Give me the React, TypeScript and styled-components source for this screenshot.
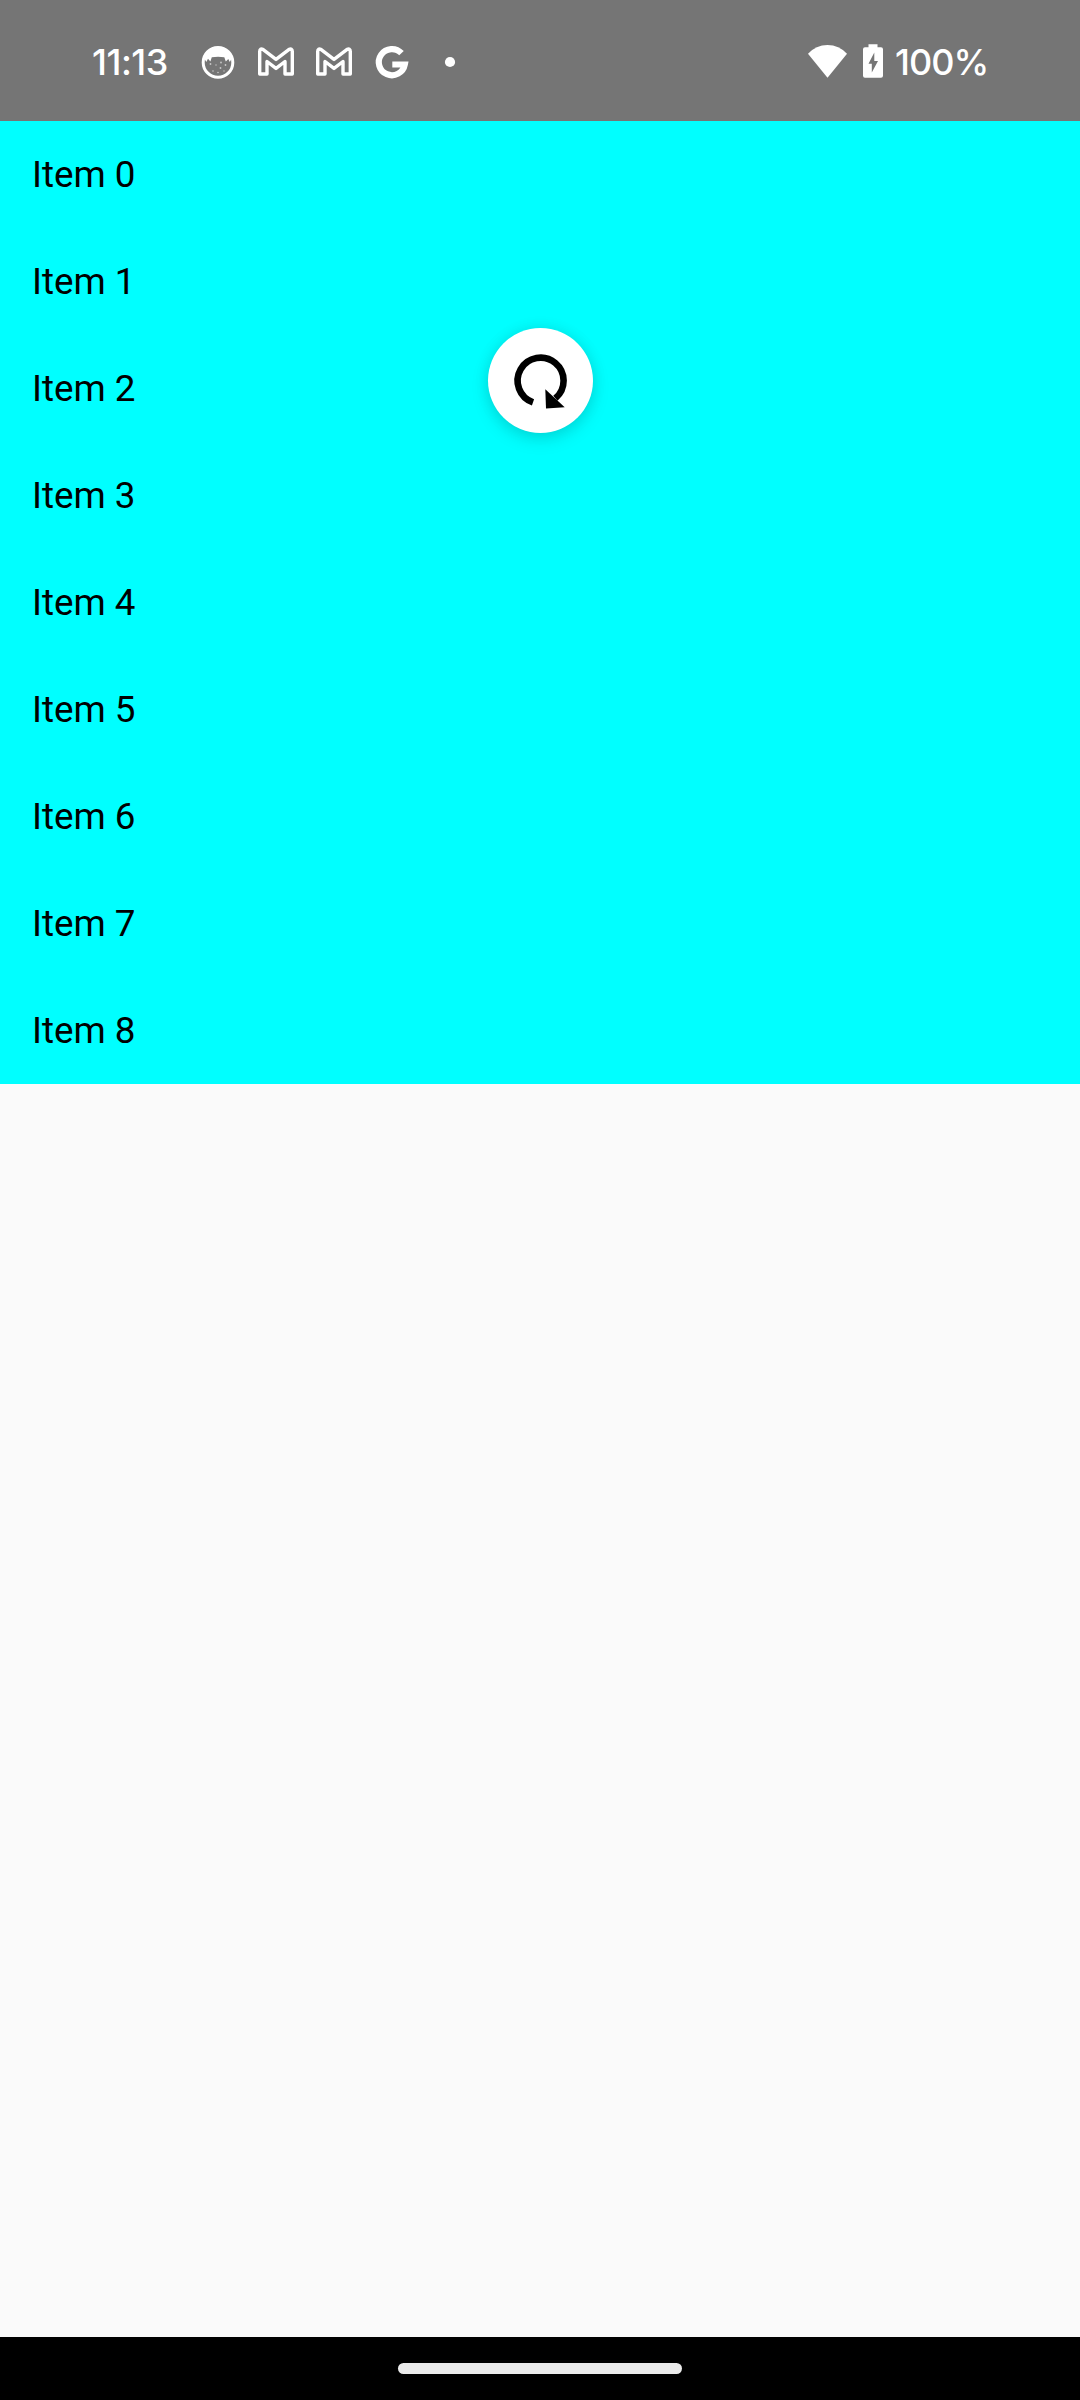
import React from "react";
import styled, { createGlobalStyle } from "styled-components";

const GlobalStyle = createGlobalStyle`
  body { margin: 0; background: #fafafa; }
`;

const Screen = styled.div`
  position: relative;
  display: flex;
  flex-direction: column;
  width: 1080px;
  height: 2400px;
  overflow: hidden;
  background: #fafafa;
  color: #000;
  font-family: Roboto, "Liberation Sans", sans-serif;
`;

const StatusBar = styled.header`
  display: flex;
  flex: none;
  justify-content: space-between;
  box-sizing: border-box;
  height: 121px;
  padding: 40px 93px 37px 92px;
  background: #757575;
  color: #fff;
`;

const StatusGroup = styled.div`
  display: flex;
  align-items: center;
  height: 44px;
`;

const StatusText = styled.span<{ $width: number; $spacing: number }>`
  width: ${(p) => p.$width}px;
  font: 500 36px/43px Inter, Roboto, sans-serif;
  letter-spacing: ${(p) => p.$spacing}px;
  white-space: nowrap;
`;

const Notifications = styled.div`
  display: flex;
  margin-left: 29px;
`;

const Glyph = styled.svg<{ $gap?: number }>`
  display: block;
  flex: none;
  margin-right: ${(p) => p.$gap ?? 0}px;
`;

const List = styled.ul`
  flex: none;
  margin: 0;
  padding: 0;
  list-style: none;
  background: #00ffff;
`;

const Row = styled.li`
  padding: 32px;
  font-size: 36.75px;
  line-height: 43px;
`;

const Spacer = styled.div`
  flex: 1;
`;

const NavBar = styled.footer`
  display: flex;
  flex: none;
  justify-content: center;
  box-sizing: border-box;
  height: 63px;
  padding-top: 26px;
  background: #000;
`;

const Handle = styled.div`
  width: 284px;
  height: 11px;
  border-radius: 6px;
  background: #ebebeb;
`;

const RefreshIndicator = styled.div`
  position: absolute;
  top: 328.4px;
  left: 488px;
  width: 105px;
  height: 105px;
  border-radius: 50%;
  background: #fff;
  box-shadow: 0 6px 18px rgba(0, 0, 0, 0.13), 0 0 16px rgba(0, 0, 0, 0.07);
`;

const CatIcon = () => (
  <Glyph width="58" height="44" viewBox="0 0 58 44">
    <circle cx="29" cy="22.4" r="14.8" fill="none" stroke="#fff" strokeWidth="3" />
    <path
      fill="#fff"
      d="M15 18C17 11 22 7 29 7S41 11 43 18L40.800 22L39.300 19L36.800 21.500L35.300 17.200Q29 16.200 22.800 17.200L21.400 21.500L19 18.700L17.300 22Z"
    />
    <g fill="#fff" fillOpacity="0.6">
      <circle cx="21.500" cy="24" r=".9" /><circle cx="32" cy="22.500" r=".9" />
      <circle cx="36.500" cy="25" r=".9" /><circle cx="27" cy="25" r=".7" />
      <circle cx="31.500" cy="28" r=".9" /><circle cx="24" cy="31" r=".8" />
      <circle cx="29" cy="32.500" r=".8" /><circle cx="35" cy="31" r=".7" />
    </g>
  </Glyph>
);

const MailIcon = () => (
  <Glyph width="58" height="44" viewBox="0 0 58 44">
    <path
      fill="none"
      stroke="#fff"
      strokeWidth="3.4"
      strokeLinejoin="round"
      d="M12.700 34V11.500Q12.700 7.700 16.200 9.600L29 19.400L41.800 9.600Q45.300 7.700 45.300 11.500V34H38V21.500L29 28.400L20 21.500V34Z"
    />
  </Glyph>
);

const SearchIcon = () => (
  <Glyph width="58" height="44" viewBox="0 0 58 44">
    <path
      fill="none"
      stroke="#fff"
      strokeWidth="6.2"
      d="M38.500 13.200A13.100 13.100 0 1 0 41.800 24.500H29.300"
    />
  </Glyph>
);

const DotIcon = () => (
  <Glyph width="58" height="44" viewBox="0 0 58 44">
    <circle cx="29" cy="22" r="5.1" fill="#fff" />
  </Glyph>
);

const WifiIcon = () => (
  <Glyph $gap={16} width="39" height="44" viewBox="0 0 39 44">
    <path fill="#fff" d="M0 13.800Q8 5 19.500 5T39 13.800L19.500 37.700Z" />
  </Glyph>
);

const BatteryIcon = () => (
  <Glyph $gap={12} width="20" height="44" viewBox="0 0 20 44">
    <path
      fill="#fff"
      fillRule="evenodd"
      d="M5.500 4.200H14.500V7.300H18Q20 7.300 20 9.300V35.800Q20 37.800 18 37.800H2Q0 37.800 0 35.800V9.300Q0 7.300 2 7.300H5.500ZM11.300 12.500L5.500 23.800H8.800V32.500L15 21H11.300Z"
    />
  </Glyph>
);

const RefreshIcon = () => (
  <Glyph width="105" height="105" viewBox="0 0 105 105">
    <path
      fill="none"
      stroke="#000"
      strokeWidth="6.6"
      d="M45 74.400A23 23 0 1 1 67.400 70.300"
    />
    <path d="M57.300 61.200L76.700 79.300L58 80.500Z" />
  </Glyph>
);

const items = Array.from({ length: 9 }, (_, i) => `Item ${i}`);

export default function App() {
  return (
    <>
      <GlobalStyle />
      <Screen>
        <StatusBar>
          <StatusGroup>
            <StatusText $width={68} $spacing={-0.5}>11:13</StatusText>
            <Notifications>
              <CatIcon />
              <MailIcon />
              <MailIcon />
              <SearchIcon />
              <DotIcon />
            </Notifications>
          </StatusGroup>
          <StatusGroup>
            <WifiIcon />
            <BatteryIcon />
            <StatusText $width={92} $spacing={-1}>100%</StatusText>
          </StatusGroup>
        </StatusBar>
        <List>
          {items.map((item) => (
            <Row key={item}>{item}</Row>
          ))}
        </List>
        <Spacer />
        <NavBar>
          <Handle />
        </NavBar>
        <RefreshIndicator>
          <RefreshIcon />
        </RefreshIndicator>
      </Screen>
    </>
  );
}
